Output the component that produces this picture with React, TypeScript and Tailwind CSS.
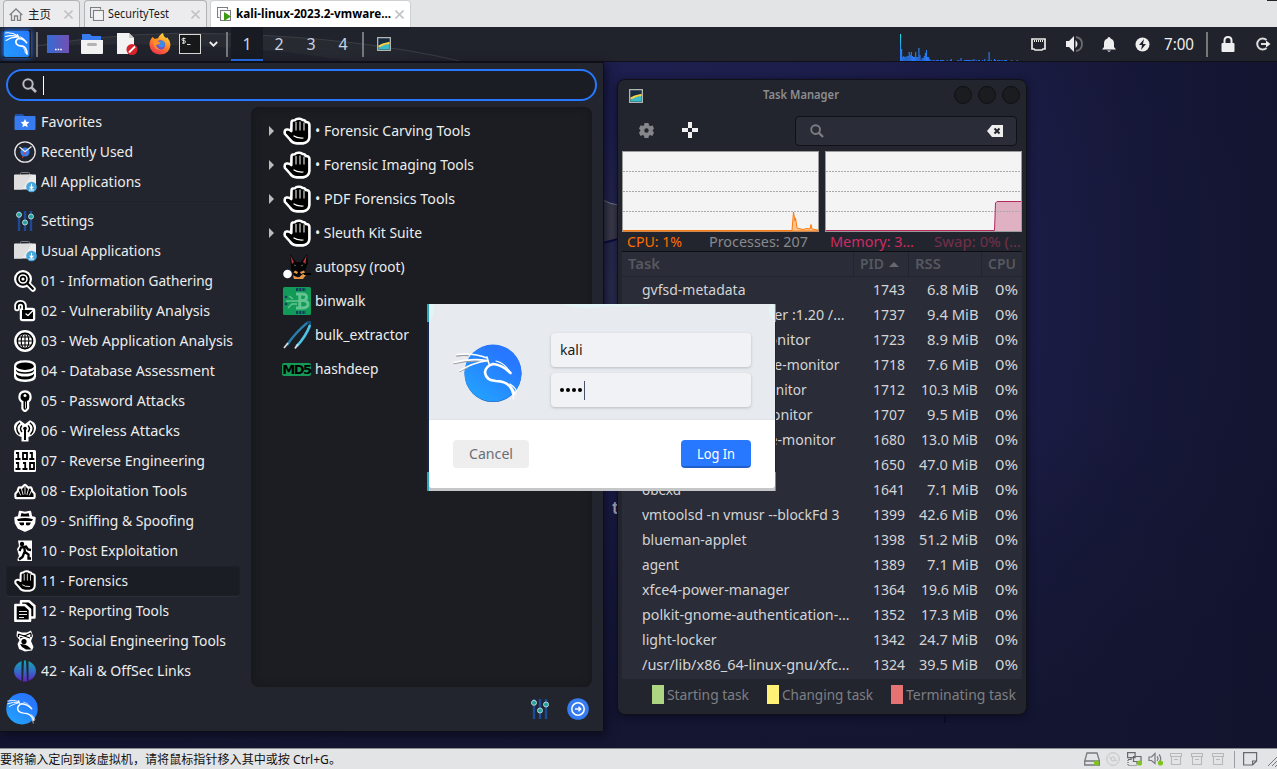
import React, { useLayoutEffect, useRef } from 'react';

type Kids = { children?: React.ReactNode };

/* Text run condensed so that it takes a given width. */
function Fit({ w, className = '', children }: { w: number; className?: string; children: string }) {
  const ref = useRef<HTMLSpanElement>(null);
  useLayoutEffect(() => {
    const el = ref.current;
    if (!el) return;
    el.style.transform = 'none';
    el.style.width = 'auto';
    const natural = el.getBoundingClientRect().width;
    el.style.width = `${w}px`;
    el.style.transform = `scaleX(${w / natural})`;
  }, [w, children]);
  return (
    <span ref={ref} className={'inline-block shrink-0 origin-left whitespace-pre ' + className}>
      {children}
    </span>
  );
}

/* Black pictogram on a white halo, as the Kali category icons. */
function Halo({ d, size = 22, halo = 4, children }: { d: string; size?: number; halo?: number } & Kids) {
  return (
    <svg width={size} height={size} viewBox="0 0 22 22" strokeLinejoin="round" strokeLinecap="round">
      <path d={d} fill="#fff" stroke="#fff" strokeWidth={halo} />
      <path d={d} fill="#000" />
      {children}
    </svg>
  );
}

function Hand({ size = 22 }: { size?: number }) {
  return (
    <svg width={size} height={size} viewBox="0 0 28 28" strokeLinejoin="round">
      <path
        d="M8.500 5.500Q8.500 3 12 3.200Q13 1.500 16 1.700Q18.500 1.500 19.500 3Q22 2.800 22.800 5Q26.400 4.800 26.400 8V20Q26 25.500 20 26.400H14Q9 26 7 22.500L2 17Q.8 13.300 3.500 12.600Q6 12 8.300 14Z"
        fill="#000" stroke="#fff" strokeWidth="2.600"
      />
      <path d="M13 5v8.500M17 4.500v9M21 5.500v8" stroke="#fff" strokeWidth="1" fill="none" />
      <path d="M10.500 18.800Q14 21.500 20.500 21" stroke="#fff" strokeWidth="1.100" fill="none" />
    </svg>
  );
}

function Folder() {
  return (
    <svg width="22" height="22" viewBox="0 0 22 22">
      <path d="M1 3h8l1.500 2H21v4H1z" fill="#1f4fa8" />
      <rect x="0.500" y="5" width="21" height="14" rx="1" fill="#367bf0" />
      <path d="M11 8l1.300 2.700 3 .4-2.200 2.100.5 3-2.600-1.400-2.600 1.400.5-3-2.200-2.100 3-.4z" fill="#fff" />
    </svg>
  );
}

function Clock() {
  return (
    <svg width="22" height="22" viewBox="0 0 22 22" fill="none">
      <circle cx="11" cy="11" r="10.200" stroke="#e8e8ea" strokeWidth="1.300" />
      <circle cx="11" cy="11" r="4.600" fill="#367bf0" />
      <path d="M5.500 6l5.500 4.800L17.500 5.500" stroke="#eee" strokeWidth="1.200" />
      <path d="M11 11L8.500 17" stroke="#d6403b" strokeWidth="1" />
    </svg>
  );
}

function Briefcase() {
  return (
    <svg width="23" height="22" viewBox="0 0 23 22" fill="none">
      <path d="M6.500 3.500V2.300Q6.500 1.500 7.500 1.500H14.500Q15.500 1.500 15.500 2.300V3.500" stroke="#777a80" />
      <path d="M1 3.500H21Q22 3.500 22 4.500V18.500H0V4.500Q0 3.500 1 3.500z" fill="#ececec" />
      <path d="M0 4.500L18 3.500 8 18.500H0z" fill="#dedede" />
      <circle cx="17.500" cy="16" r="5.300" fill="#46a6dd" />
      <path d="M17.500 12.800v4.700M15.600 15.700l1.900 2 1.900-2M15 19h5" stroke="#fff" strokeWidth="1.100" />
    </svg>
  );
}

function Sliders() {
  return (
    <svg width="22" height="22" viewBox="0 0 22 22">
      <path d="M5 1v20M11 1v20M17 1v20" stroke="#1b4a98" strokeWidth="2.400" />
      <g fill="#1fa3a0" stroke="#c9dcdc" strokeWidth="0.900">
        <circle cx="5" cy="4.800" r="2.500" />
        <circle cx="11" cy="12.500" r="2.500" />
        <circle cx="17" cy="6.500" r="2.500" />
      </g>
    </svg>
  );
}

const white = { stroke: '#fff', fill: 'none' };
const black = { stroke: '#000', fill: 'none' };

function Magnifier() {
  return (
    <svg width="22" height="22" viewBox="0 0 22 22" fill="none" strokeLinecap="round">
      <circle cx="9" cy="9" r="6.500" stroke="#fff" strokeWidth="5" fill="#fff" />
      <path d="M13.500 13.500L19 19" stroke="#fff" strokeWidth="5.500" />
      <circle cx="9" cy="9" r="5.800" stroke="#000" strokeWidth="2" />
      <circle cx="9" cy="9" r="2.400" stroke="#000" strokeWidth="1.600" />
      <path d="M13.500 13.500L18.800 18.800" stroke="#000" strokeWidth="2.200" />
    </svg>
  );
}
function Unlock() {
  return (
    <svg width="22" height="22" viewBox="0 0 22 22" fill="none" strokeLinecap="round" strokeLinejoin="round">
      <path d="M3 8.500V6.500Q3 2.800 6.500 2.800T10 6.500V9" stroke="#fff" strokeWidth="5.600" />
      <path d="M8.500 10.500H18.500V18.500H8.500z" stroke="#fff" strokeWidth="5.500" fill="#fff" />
      <path d="M3 8.500V6.500Q3 2.800 6.500 2.800T10 6.500V9" stroke="#000" strokeWidth="1.900" />
      <path d="M8 10H19V19H8z" fill="#000" />
      <path d="M12 14l2 1.500 6-6" stroke="#fff" strokeWidth="1.300" />
    </svg>
  );
}
function Globe() {
  return (
    <svg width="22" height="22" viewBox="0 0 22 22">
      <circle cx="11" cy="11" r="10.900" fill="#fff" />
      <circle cx="11" cy="11" r="7.700" fill="#fff" stroke="#000" strokeWidth="1.400" />
      <g {...black} strokeWidth="1.100">
        <ellipse cx="11" cy="11" rx="3.800" ry="7.700" />
        <path d="M3 11H19M11 3V19M4.500 7H17.500M4.500 15H17.500" />
      </g>
    </svg>
  );
}
function Database() {
  return (
    <svg width="22" height="22" viewBox="0 0 22 22">
      <path d="M0 6Q0 .3 11 .3T22 6V16.500Q22 21.900 11 21.900T0 16.500z" fill="#fff" />
      <ellipse cx="11" cy="6.200" rx="8.800" ry="3.700" fill="#000" />
      <path d="M2 9.500Q4 12.300 11 12.300T20 9.500V10.500Q19 13.800 11 13.800T2 10.500zM2 13.800Q4 16.600 11 16.600T20 13.800V15.500Q19 19.500 11 19.500T2 15.500z" fill="#000" />
    </svg>
  );
}
function KeyIcon() {
  return (
    <Halo d="M11 2.500Q15.500 2.800 15.500 7 15.500 10 13 11V18L11 20 9.500 18.500V11Q6.500 10 6.500 7 6.500 2.800 11 2.500z" halo={4.400}>
      <circle cx="11" cy="5.500" r="1.500" fill="#fff" />
      <path d="M11.500 12v6" {...white} strokeWidth="0.800" />
    </Halo>
  );
}
function Antenna() {
  return (
    <svg width="22" height="22" viewBox="0 0 22 22" fill="none">
      <path d="M6 .3Q-1.500 3 .3 10Q2 15.500 7.500 17V21.500H14.500V17Q20 15.500 21.700 10Q23.500 3 16 .3L11 4z" fill="#fff" />
      <path d="M6 2.800Q-.3 8 5.500 14.500M16 2.800Q22.300 8 16.500 14.500M8 5.500Q5 8.500 8 12M14 5.500Q17 8.500 14 12" stroke="#000" strokeWidth="1.400" />
      <circle cx="11" cy="8.500" r="1.800" fill="#000" />
      <path d="M11 9V20" stroke="#000" strokeWidth="2" />
    </svg>
  );
}
function Binary() {
  return (
    <svg width="22" height="22" viewBox="0 0 22 22">
      <rect width="22" height="22" rx="1.500" fill="#fff" />
      <g {...black} strokeWidth="1.800">
        <path d="M2 3h2.200v6M1.500 9h5M9 3h4v6H9zM15.800 3h2.200v6M15.300 9h5M2 13h2.200v6M1.500 19h5M9 13h2.200v6M8.500 19h5M16 13h4v6h-4z" />
      </g>
    </svg>
  );
}
function Burst() {
  return (
    <Halo d="M2.500 17V14L4.500 12 5.500 8.500 8 9 11 6 14 9 16.500 8.500 17.500 12 19.500 14V17z" halo={4.400}>
      <path d="M6.500 15L4.500 10.500M9 14.500L7.500 9M11 14V7M13 14.500L14.500 9M15.500 15L17.500 10.500" {...white} strokeWidth="0.900" />
    </Halo>
  );
}
function Spy() {
  return (
    <svg width="22" height="22" viewBox="0 0 22 22" strokeLinejoin="round">
      <path d="M1.500 8L5 7.200 6 2 11 3 16 2 17 7.200 20.500 8 20 13 17.500 17.500 11 20.500 4.500 17.500 2 13z" fill="#fff" stroke="#fff" strokeWidth="2.500" />
      <path d="M6.500 6.500L7.500 3Q11 4.500 14.500 3L15.500 6.500zM3 9.200Q11 7 19 9.200L18 11H4zM5 12.500H10V15Q6 16.500 5 12.500zM12 12.500H17Q16 16.500 12 15z" fill="#000" />
    </svg>
  );
}
function Runner() {
  return (
    <svg width="22" height="22" viewBox="0 0 22 22" fill="none">
      <path d="M4 .5H18V21H4Q2.500 20 5 16L3 9 5 6z" fill="#fff" />
      <circle cx="8" cy="4" r="2.200" fill="#000" />
      <path d="M10 6L11 12L14.500 14.500V18.500H17M10.500 12L8.500 17L5 19.500M5.500 11L7 7.500L12 6.500L14 9.500L17 10" stroke="#000" strokeWidth="2.300" />
    </svg>
  );
}
function Papers() {
  return (
    <svg width="22" height="22" viewBox="0 0 22 22" strokeLinejoin="round">
      <path d="M7 1.200H15L20.500 6V17.500H7z" fill="#000" stroke="#fff" strokeWidth="2.400" />
      <path d="M1.400 5H11L16 9.500V20.800H1.400z" fill="#000" stroke="#fff" strokeWidth="2.600" />
      <path d="M5 11.500H13M5 14.500H13M5 17.500H10" {...white} strokeWidth="0.900" />
    </svg>
  );
}
function Mask() {
  return (
    <svg width="22" height="22" viewBox="0 0 22 22" fill="none">
      <path d="M3 1L8 2.500 13 2.500 17 .5 19 6 17 11 19.500 17 18 20.500 11 21.500 5 19 3.500 14 5.500 10 2.500 6z" fill="#fff" />
      <path d="M4.500 4L16 8M17 3L6 8M4.500 4V7M17 3.500V7" stroke="#000" strokeWidth="1.300" />
      <circle cx="10" cy="11.500" r="2.600" fill="#000" />
      <path d="M6 14Q12 14 15 17L17.500 19.500H12L8 17z" fill="#000" />
    </svg>
  );
}
function OffSec() {
  return (
    <svg width="22" height="22" viewBox="0 0 22 22">
      <defs>
        <linearGradient id="osg" x1="0" y1="0" x2="0" y2="1">
          <stop offset="0" stopColor="#10a7b5" />
          <stop offset="0.550" stopColor="#3568c8" />
          <stop offset="1" stopColor="#6423c4" />
        </linearGradient>
      </defs>
      <path d="M7.500 1V21Q0 17.500 0 11T7.500 1zM14.500 1V21Q22 17.500 22 11T14.500 1zM10 .5H12L13 21.500H9z" fill="url(#osg)" />
    </svg>
  );
}

/* Kali dragon; the disc and the curl share a 100 x 85 grid. */
function KaliRound({ width, height, box, id, halo }: { width: number; height: number; box: string; id: string; halo?: boolean }) {
  return (
    <svg width={width} height={height} viewBox={box} fill="none" strokeLinecap="round" strokeLinejoin="round">
      <defs>
        <linearGradient id={id} x1="0.200" y1="0.900" x2="0.700" y2="0.200">
          <stop offset="0" stopColor="#23a0ff" />
          <stop offset="1" stopColor="#2777ff" />
        </linearGradient>
      </defs>
      {halo && <circle cx="53" cy="43.600" r="28.500" fill="#1b61c4" />}
      <circle cx="53" cy="43" r="28.500" fill={`url(#${id})`} />
      {halo && <path d="M14 33.500Q30 30 47 31.500M17 26Q22 25 28 25.500M20 41.500Q24 39 28 37.500" stroke="#9a9da3" strokeWidth="1.400" />}
      <g stroke="#fff">
        <path d={halo ? 'M17 24.500Q33 22.500 47 28 M14 32.500Q30 28 47 30.500 M20 40.500Q32 33 48 30.500 M47 27L49 34' : 'M27 29Q38 26 47 30 M27 34Q38 30 47 31.500 M30 39Q38 34 48 32 M47 28L49 34'} strokeWidth="1.600" />
        <path d="M70.500 43Q62 34.500 53 34Q45.500 36 45 42.500Q46 50.500 56 51Q70 51 74.500 64" strokeWidth="2.600" />
        <path d="M56 31Q65 33 70.500 43M66 53Q72.500 58 73.500 69M70 54Q76 58 76.500 62" strokeWidth="1.200" />
      </g>
    </svg>
  );
}

function KaliTile() {
  return (
    <svg width="28" height="28" viewBox="0 0 56 56" fill="none" strokeLinecap="round" className="shadow-[0_0_5px_#2777ff]">
      <defs>
        <linearGradient id="ktg" x1="0" y1="1" x2="1" y2="0">
          <stop offset="0" stopColor="#249dff" />
          <stop offset="1" stopColor="#2777ff" />
        </linearGradient>
      </defs>
      <rect x="1" y="1" width="52" height="53" rx="5" fill="url(#ktg)" />
      <g stroke="#fff">
        <path d="M5 6Q18 4 30 12M5 13Q18 9 30 14M6 21Q18 13 31 14.500M29 9L33 18" strokeWidth="2.200" />
        <path d="M47 25Q39 16 31 17Q23 21 27 28Q31 33 39 32Q47 34 48 48" strokeWidth="3.500" />
        <path d="M34 13Q42 15 47 26M40 34Q44 38 45 46" strokeWidth="1.800" />
      </g>
    </svg>
  );
}

const topRows: [string, number, React.ReactNode][] = [
  ['Favorites', 61, <Folder />],
  ['Recently Used', 92, <Clock />],
  ['All Applications', 100, <Briefcase />],
];
const catRows: [string, number, React.ReactNode][] = [
  ['Settings', 53, <Sliders />],
  ['Usual Applications', 120, <Briefcase />],
  ['01 - Information Gathering', 172, <Magnifier />],
  ['02 - Vulnerability Analysis', 169, <Unlock />],
  ['03 - Web Application Analysis', 192, <Globe />],
  ['04 - Database Assessment', 174, <Database />],
  ['05 - Password Attacks', 144, <KeyIcon />],
  ['06 - Wireless Attacks', 139, <Antenna />],
  ['07 - Reverse Engineering', 164, <Binary />],
  ['08 - Exploitation Tools', 146, <Burst />],
  ['09 - Sniffing & Spoofing', 153, <Spy />],
  ['10 - Post Exploitation', 137, <Runner />],
  ['11 - Forensics', 87, <Hand />],
  ['12 - Reporting Tools', 128, <Papers />],
  ['13 - Social Engineering Tools', 185, <Mask />],
  ['42 - Kali & OffSec Links', 150, <OffSec />],
];

function MenuRow({ row }: { row: [string, number, React.ReactNode] }) {
  const active = row[0].startsWith('11');
  return (
    <div className={'flex h-[30px] w-[234px] shrink-0 items-center rounded pl-2 ' + (active ? 'bg-[#1b1d24] shadow-[0_0_0_1px_#1e2027_inset,0_1px_0_#2b2d36]' : '')}>
      <div className="w-[27px] shrink-0">{row[2]}</div>
      <Fit w={row[1]} className="mb-0.5">{row[0]}</Fit>
    </div>
  );
}

function Doberman() {
  return (
    <svg width="28" height="28" viewBox="0 0 28 28">
      <path d="M7 1L13 9H18L24 1L25 10L22 18L20 23H12L8 16z" fill="#050505" />
      <path d="M7.500 2.500L11 9 9 11zM23.500 2.500L20 9 22.500 11z" fill="#b8333a" />
      <path d="M12 17.500L15 19 14 21 10.500 19.500zM21 17.500L17 19 18 21 22 19.500zM10 22.500L15 24.500 20 21 23 22 20 26 11 26z" fill="#e8964a" />
      <path d="M14 20L16 22 18 20 17 24H15z" fill="#111" />
      <path d="M11 12l2 .8M20 12l-2 .8" stroke="#777" strokeWidth="0.800" />
      <path d="M21 21H28" stroke="#000" strokeWidth="2" />
      <circle cx="4.500" cy="21" r="4.300" fill="#fff" />
    </svg>
  );
}
function Binwalk() {
  return (
    <svg width="28" height="28" viewBox="0 0 28 28" fill="none">
      <rect width="28" height="28" rx="1.500" fill="#119a58" />
      <path d="M13 2.500H23M13 25.500H23" stroke="#173d63" strokeWidth="3" strokeDasharray="2.200 1" />
      <path d="M13 7H19Q24 7 23.500 10.500T19.500 13.500Q25.500 14 25 17.500T19 21H13M16.800 7V21M16.800 13.600H20" stroke="#62c391" strokeWidth="3" />
      <path d="M16 14H3M14 17H9L5 21M10 12L6 9" stroke="#62c391" strokeWidth="1.400" />
      <circle cx="3" cy="10" r="1.300" fill="#173d63" /><circle cx="3" cy="17" r="1.300" fill="#173d63" />
    </svg>
  );
}
function Tweezers() {
  return (
    <svg width="28" height="28" viewBox="0 0 28 28" fill="none">
      <path d="M4 24Q13 11 24 2Q27.500 -.5 27.500 4Q24 15 13 26" stroke="#11547f" strokeWidth="2.600" />
      <path d="M4 24Q13 11 24 2" stroke="#2d7fa9" strokeWidth="2.200" />
      <path d="M27 4Q23 15 14 25" stroke="#55c4df" strokeWidth="2.400" />
      <path d="M1 27L5 22M12 27.500L15 23" stroke="#d6d9dc" strokeWidth="1.800" />
    </svg>
  );
}
function Md5() {
  return (
    <span className="-ml-px inline-block w-[30px] whitespace-nowrap rounded-[2px] bg-[#159957] text-center font-['DejaVu_Sans'] text-[13px] leading-[13px] font-bold tracking-[-1.500px] text-black">MD5</span>
  );
}

function AppMenu() {
  return (
    <section className="absolute top-[35px] left-0 flex h-[670px] w-[604px] flex-col border border-l-0 border-[#0e0f14] bg-[#23252e] pl-1.5 text-[15px] text-[#eceded] shadow-[2px_3px_10px_#0b0c20]">
      <div className="mt-1.5 flex h-8 w-[591px] shrink-0 items-center rounded-full border-2 border-[#2777ff] bg-[#1b1d24] pl-3.5">
        <svg width="15" height="15" viewBox="0 0 15 15" fill="none" stroke="#b9babd" strokeWidth="2">
          <circle cx="6" cy="6" r="4.700" /><path d="M9.500 9.500L14 14" strokeWidth="2.600" />
        </svg>
        <i className="ml-1.5 h-[19px] w-px bg-white" />
      </div>
      <div className="flex pt-1.5">
        <nav className="flex w-[245px] flex-col">
          {topRows.map((r) => <MenuRow key={r[0]} row={r} />)}
          <hr className="my-1 w-[234px] border-[#1f2129]" />
          {catRows.map((r) => <MenuRow key={r[0]} row={r} />)}
        </nav>
        <div className="flex h-[580px] w-[341px] flex-col rounded-lg bg-[#1b1d23] pt-[7px] shadow-[0_0_7px_2px_#17181c_inset]">
          {([['• Forensic Carving Tools', 155.500], ['• Forensic Imaging Tools', 159], ['• PDF Forensics Tools', 140], ['• Sleuth Kit Suite', 107]] as [string, number][]).map(([t, w]) => (
            <div key={t} className="flex h-[34px] items-center">
              <svg width="6" height="10" viewBox="0 0 6 10" className="ml-[18px]"><path d="M0 0L5 5L0 10z" fill="#bbb" /></svg>
              <div className="ml-[8px] mr-[4px] flex"><Hand size={28} /></div>
              <Fit w={w} className="mb-0.5">{t}</Fit>
            </div>
          ))}
          {([['autopsy (root)', 89.500, <Doberman />], ['binwalk', 50.500, <Binwalk />], ['bulk_extractor', 94, <Tweezers />], ['hashdeep', 63.500, <Md5 />]] as [string, number, React.ReactNode][]).map(([t, w, icon]) => (
            <div key={t} className="flex h-[34px] items-center pl-[32px]">
              <div className="mr-[4px] flex w-7">{icon}</div>
              <Fit w={w} className="mb-0.5">{t}</Fit>
            </div>
          ))}
        </div>
      </div>
      <div className="flex flex-1 items-center">
        <KaliRound width={32} height={32} box="24 14.500 58 58" id="user" />
        <div className="ml-[491px]"><Sliders /></div>
        <svg width="22" height="22" viewBox="0 0 22 22" fill="none" stroke="#fff" className="ml-4">
          <circle cx="11" cy="11" r="10.800" fill="#367bf0" stroke="none" />
          <circle cx="11" cy="11" r="6.200" strokeWidth="1.500" />
          <path d="M8 11h5.500M11.500 8.800L13.700 11l-2.200 2.200" strokeWidth="1.400" />
        </svg>
      </div>
    </section>
  );
}

function GraphIcon() {
  return (
    <svg width="14" height="14" viewBox="0 0 15 15">
      <rect x="0.700" y="0.700" width="13.600" height="13.600" fill="#182c3f" stroke="#b9bdb9" strokeWidth="1.300" />
      <path d="M1.500 12Q5 8 8 8.500L13.500 7V13.500H1.500z" fill="#38bcc9" />
      <path d="M1.500 9L6 7 13.500 5V7.500L8 8.500 1.500 11.500z" fill="#f5d34b" />
    </svg>
  );
}

const procs: [string, number, string, string][] = [
  ['gvfsd-metadata', 103.500, '1743', '6.8 MiB'],
  ['gvfsd-trash --spawner :1.20 /…', 202.500, '1737', '9.4 MiB'],
  ['xfce4-clipboard-monitor', 168.500, '1723', '8.9 MiB'],
  ['gvfs-gphoto2-volume-monitor', 197.500, '1718', '7.6 MiB'],
  ['gvfs-mtp-volume-monitor', 164.500, '1712', '10.3 MiB'],
  ['gvfs-goa-volume-monitor', 170.500, '1707', '9.5 MiB'],
  ['gvfs-udisks2-volume-monitor', 193.500, '1680', '13.0 MiB'],
  ['agent', 37, '1650', '47.0 MiB'],
  ['obexd', 39, '1641', '7.1 MiB'],
  ['vmtoolsd -n vmusr --blockFd 3', 197.500, '1399', '42.6 MiB'],
  ['blueman-applet', 104.500, '1398', '51.2 MiB'],
  ['agent', 37, '1389', '7.1 MiB'],
  ['xfce4-power-manager', 147.500, '1364', '19.6 MiB'],
  ['polkit-gnome-authentication-…', 207.500, '1352', '17.3 MiB'],
  ['light-locker', 74.500, '1342', '24.7 MiB'],
  ['/usr/lib/x86_64-linux-gnu/xfc…', 207.500, '1324', '39.5 MiB'],
];

function TaskManager() {
  const grid = 'M1 20.500H196M1 40.500H196M1 60.500H196';
  return (
    <section className="absolute top-[52px] left-[617px] flex h-[636px] w-[410px] flex-col rounded-lg border border-[#101117] bg-[#23252e] px-1 text-[15px] text-[#d3d4d6] shadow-[0_2px_9px_#0c0d22]">
      <header className="flex h-[31px] shrink-0 items-center pl-[7px] text-[13px] font-semibold text-[#8b8d90]">
        <GraphIcon />
        <div className="ml-[120px] flex w-[191px]"><Fit w={76} className="mb-0.5">Task Manager</Fit></div>
        <div className="flex gap-[6px] pb-px">
          {[0, 1, 2].map((i) => <i key={i} className="size-[18px] rounded-full border border-[#0f1014] bg-[#1b1c20]" />)}
        </div>
      </header>
      <div className="flex h-10 shrink-0 items-center">
        <svg width="15" height="15" viewBox="0 0 15 15" className="mb-0.5 ml-[17px]">
          <path fillRule="evenodd" d="M5.500 0h4l.5 2.300 1.500.9L13.500 2.300 15 5.500 13.500 7.500 15 9.800 13.300 12.900 11 12 9.800 12.900 9.500 15h-4L5 12.800 3.700 12 1.500 12.900 0 9.700 1.500 7.500 0 5.400 1.700 2.200 3.900 3 5 2.300zM7.500 5.300a2.200 2.200 0 100 4.400 2.200 2.200 0 000-4.400z" fill="#85868a" />
        </svg>
        <svg width="16" height="16" viewBox="0 0 16 16" className="mb-0.5 ml-[28px]">
          <path d="M6 0h4v6h6v4h-6v6H6v-6H0V6h6z" fill="#f0f0f0" /><path d="M6 6h4v4H6z" fill="#23252e" />
        </svg>
        <div className="ml-[97px] flex h-[30px] w-[222px] items-center rounded border border-[#101117] bg-[#2a2c37] pr-[13px] pl-3.5">
          <svg width="14" height="14" viewBox="0 0 15 15" fill="none" stroke="#7c7d82" strokeWidth="2">
            <circle cx="6" cy="6" r="4.700" /><path d="M9.500 9.500L14 14" strokeWidth="2.400" />
          </svg>
          <svg width="16" height="12" viewBox="0 0 16 12" className="ml-auto">
            <path d="M5 0H16V12H5L0 6z" fill="#eee" /><path d="M7.500 3.500l5 5M12.500 3.500l-5 5" stroke="#23252e" strokeWidth="2" />
          </svg>
        </div>
      </div>
      <div className="flex shrink-0 gap-[6px]">
        <svg width="197" height="81" viewBox="0 0 197 81" fill="none">
          <rect x="0.500" y="0.500" width="196" height="80" fill="#f4f4f4" stroke="#9b9b9b" />
          <path d={grid} stroke="#aaa" strokeDasharray="2 1" />
          <path d="M1 79.500H170L171.500 61 173 70 173.500 67 175 77 181 78.500 185 77.500 188 78 189 73.500 190 78 196 79V80H1z" fill="#ffc38e" stroke="#fb7a0c" strokeWidth="1" />
        </svg>
        <svg width="197" height="81" viewBox="0 0 197 81" fill="none">
          <rect x="0.500" y="0.500" width="196" height="80" fill="#f4f4f4" stroke="#9b9b9b" />
          <path d="M1 79.500H169.500L170.500 52 172 50.500H196V80H1z" fill="#dfb1c3" />
          <path d={grid} stroke="#aaa" strokeDasharray="2 1" />
          <path d="M1 79.500H169.500L170.500 52 172 50.500H196" stroke="#b5295b" />
        </svg>
      </div>
      <div className="flex h-[20px] shrink-0 items-center overflow-hidden border-b border-[#0c0d11] leading-[19px]">
        <div className="ml-[5px] w-[82px] text-[#ff6d00]"><Fit w={55}>CPU: 1%</Fit></div>
        <div className="w-[121px] text-[#88898d]"><Fit w={99}>Processes: 207</Fit></div>
        <div className="w-[104px] text-[#d02b63]"><Fit w={84}>Memory: 3…</Fit></div>
        <div className="text-[#74304b]"><Fit w={87}>Swap: 0% (…</Fit></div>
      </div>
      <div className="flex h-[427px] shrink-0 flex-col bg-[#2a2c37]">
        <div className="flex h-[25px] shrink-0 items-center border-b border-[#23252e] font-semibold text-[#56585f]">
          <div className="flex h-full w-[232px] items-center border-r border-[#23252e] pl-1.5"><Fit w={32} className="mb-0.5">Task</Fit></div>
          <div className="flex h-full w-[55px] items-center border-r border-[#23252e] pl-1.5">
            <Fit w={24} className="mb-0.5">PID</Fit>
            <svg width="10" height="5" viewBox="0 0 10 5" className="ml-[5px]"><path d="M0 5L5 0l5 5z" fill="#66686e" /></svg>
          </div>
          <div className="flex h-full w-[73px] items-center border-r border-[#23252e] pl-1.5"><Fit w={26} className="mb-0.5">RSS</Fit></div>
          <div className="flex pl-1.5"><Fit w={28} className="mb-0.5">CPU</Fit></div>
        </div>
        <ul className="pt-px">
          {procs.map(([name, w, pid, rss]) => (
            <li key={pid} className="flex h-[25px] items-center pb-0.5 pl-5">
              <div className="flex w-[212px]"><Fit w={w}>{name}</Fit></div>
              <div className="flex w-[51px] justify-end"><Fit w={32}>{pid}</Fit></div>
              <div className="flex w-[73px] justify-end"><Fit w={rss.length === 7 ? 51.500 : rss[0] === '1' ? 57 : 59}>{rss}</Fit></div>
              <div className="flex w-[40px] justify-end"><Fit w={23}>0%</Fit></div>
            </li>
          ))}
        </ul>
      </div>
      <footer className="flex h-[31px] shrink-0 items-center pl-[30px] text-[#7e7f83]">
        <i className="mr-[3px] h-[19px] w-3 bg-[#aed581]" /><Fit w={82}>Starting task</Fit>
        <i className="mr-[3px] ml-[18px] h-[19px] w-3 bg-[#fff176]" /><Fit w={91}>Changing task</Fit>
        <i className="mr-[3px] ml-[18px] h-[19px] w-3 bg-[#e57373]" /><Fit w={110}>Terminating task</Fit>
      </footer>
    </section>
  );
}

function Login() {
  return (
    <section className="absolute top-[277px] left-[427px] h-[187px] w-[349px] border-r border-l-2 border-x-[#132850] bg-[#c5c6c8] pb-[3px] text-[15px]">
      <div className="flex h-full flex-col overflow-hidden rounded-[3px] bg-white">
        <div className="flex h-[116px] shrink-0 border-b border-[#e0e2e4] bg-[#e7eaee] pl-[11px]">
          <div className="w-[111px] pt-[26px]"><KaliRound width={100} height={85} box="0 0 100 85" id="login" halo /></div>
          <div className="flex flex-col gap-1.5 pt-[29px]">
            <div className="flex h-[34px] w-[200px] items-center rounded bg-[#f1f2f6] pl-[9px] text-[#1b1b1b] shadow-[0_1px_3px_#b9bbc0]"><Fit w={22.500} className="mb-0.5">kali</Fit></div>
            <div className="flex h-[34px] w-[200px] items-center rounded bg-[#f1f2f6] pl-[9px] shadow-[0_1px_3px_#b9bbc0]">
              <div className="flex gap-0.5">{[0, 1, 2, 3].map((i) => <i key={i} className="size-1 rounded-full bg-black" />)}</div>
              <i className="ml-0.5 h-[19px] w-px bg-[#46536a]" />
            </div>
          </div>
        </div>
        <div className="flex justify-between pt-5 pr-6 pl-6">
          <div className="flex h-7 w-[76px] items-center justify-center rounded bg-[#eee] text-[#6b6d75]"><Fit w={44} className="mb-0.5">Cancel</Fit></div>
          <div className="flex h-7 w-[70px] items-center justify-center rounded border-b-2 border-[#205fcb] bg-[#2777ff] text-white"><Fit w={38}>Log In</Fit></div>
        </div>
      </div>
      <svg className="absolute top-0 -left-0.5" width="349" height="187" viewBox="0 0 349 187">
        <path d="M0 0h2v18H0zM348 0h1v18h-1zM0 168h2v19H0zM348 168h1v19h-1z" fill="#2ba6c0" />
        <path d="M2 0H6Q10 10 2 17zM347 0H343Q339 10 347 17zM135 0H225Q205 4 180 2Q155 7 135 0z" fill="#e3f4f6" />
      </svg>
    </section>
  );
}

const load = [27, 12, 4, 5, 4, 4, 5, 5, 9, 6, 9, 5, 4, 4, 9, 4, 4, 13, 6, 1, 3, 3, 5, 8, 11, 4, 4, 2, 1, 0, 1, 1, 0, 1, 1, 1, 0, 1, 1, 1, 1, 0, 0, 1, 0, 0, 1, 2, 0, 0, 0, 0, 0, 1, 1, 0, 3, 0, 0, 1, 1, 1, 1, 1, 1, 1, 1, 1, 2, 0, 1, 0, 1, 1, 0, 0, 1, 0, 2, 0, 0, 1, 9, 0, 1, 0, 0, 2, 1, 0, 1, 1, 1, 0, 1, 0, 1, 1, 1, 0, 0, 0, 0, 1, 0, 0, 0, 0, 1];

function Panel() {
  const rule = <i className="h-[25px] w-[2px] shrink-0 bg-[#77787c]" />;
  return (
    <div className="relative flex h-[35px] w-full shrink-0 items-center border-b border-[#101117] bg-[#21232c]">
      <svg className="absolute inset-0" width="500" height="34" viewBox="0 0 500 34">
        <defs><linearGradient id="streak"><stop stopColor="#2a2c34" /><stop offset="0.700" stopColor="#282a32" /><stop offset="1" stopColor="#21232c" /></linearGradient></defs>
        <path d="M36 19Q130 3 230 7Q360 11 460 34H350Q220 12 36 19z" fill="url(#streak)" />
        <path d="M36 19Q130 3 230 7Q360 11 460 34" fill="none" stroke="#3c3e45" />
      </svg>
      <div className="relative flex h-full items-center">
        <div className="ml-[3px] flex w-[33px]"><KaliTile /></div>
        {rule}
        <svg className="ml-[9px]" width="22" height="18" viewBox="0 0 22 18">
          <defs><linearGradient id="dsk"><stop stopColor="#356cd3" /><stop offset="1" stopColor="#7350b4" /></linearGradient></defs>
          <rect width="22" height="18" fill="url(#dsk)" /><path d="M8 14.500h7" stroke="#fff" strokeWidth="1.500" strokeDasharray="1.600 1" />
        </svg>
        <svg className="ml-3" width="22" height="20" viewBox="0 0 22 20">
          <path d="M1 0h8l2 2h9v6H1z" fill="#367bf0" /><path d="M0 6h22v13q0 1-1 1H1q-1 0-1-1z" fill="#f2f2f2" /><rect x="6" y="9" width="10" height="3" rx="1.500" fill="#b3b3b3" />
        </svg>
        <svg className="ml-[14px]" width="21" height="22" viewBox="0 0 21 22">
          <path d="M0 0h12l5 5v16H0z" fill="#f3f3f3" /><path d="M12 0l5 5h-5z" fill="#ccc" />
          <circle cx="15" cy="16.500" r="5.500" fill="#d9232b" /><path d="M12 19.500l6-6" stroke="#fff" strokeWidth="1.800" />
        </svg>
        <svg className="ml-[11px]" width="22" height="22" viewBox="0 0 22 22">
          <defs><linearGradient id="ffx" x1="0.800" y1="0" x2="0.300" y2="1"><stop stopColor="#ffe14a" /><stop offset="0.450" stopColor="#ff9227" /><stop offset="1" stopColor="#f2304e" /></linearGradient></defs>
          <path d="M3.500 4L6 6Q8 5 9 5.500 10 2 14 0 14 3 17 5 18.500 5 18 4 21.500 8 21.500 12 20.500 21.500 11 21.500 1.500 21 .5 12 .5 7 3.500 4z" fill="url(#ffx)" />
          <circle cx="11.500" cy="12" r="4.700" fill="#7154c8" /><circle cx="12.500" cy="11" r="3.200" fill="#3b8bea" />
          <path d="M4 8Q7 7 11.500 9.500 10 12 7 12 8 16 12 16.500 5 18 4 8z" fill="#ff8f26" />
        </svg>
        <svg className="ml-2" width="22" height="20" viewBox="0 0 22 20" fill="none">
          <rect x="0.500" y="0.500" width="21" height="19" fill="#17181a" stroke="#d9d9d9" />
          <path d="M6.500 4.500H4q-1 0-1 1t1 1.200h1.500q1 0 1 1T5.500 9H3M4.700 3.500v6.500M8 10.500h3.500" stroke="#eee" strokeWidth="0.900" />
        </svg>
        <svg className="ml-2" width="9" height="6" viewBox="0 0 9 6"><path d="M.8 1l3.700 3.700L8.200 1" fill="none" stroke="#eee" strokeWidth="1.800" /></svg>
        <i className="ml-2 h-[34px] w-0" />
        {rule}
        <div className="ml-[3px] flex text-base text-[#c9d4e2]">
          {['1', '2', '3', '4'].map((n) => (
            <div key={n} className={'flex h-[34px] w-8 items-center justify-center ' + (n === '1' ? 'border-b-2 border-[#2777ff] bg-[#191b22] pt-0.5' : '')}>{n}</div>
          ))}
        </div>
        <i className="w-[3px]" />
        {rule}
        <div className="ml-[13px]"><GraphIcon /></div>
      </div>
      <svg className="absolute top-[7px] left-[900px]" width="120" height="27" viewBox="0 0 120 27">
        <defs><linearGradient id="cpu" x1="0" y1="0" x2="0" y2="27" gradientUnits="userSpaceOnUse"><stop stopColor="#20dcd8" /><stop offset="0.600" stopColor="#2988f5" /><stop offset="1" stopColor="#2777ff" /></linearGradient></defs>
        {load.map((h, i) => <rect key={i} x={i * 1.080} y={27 - h} width="1.080" height={h} fill="url(#cpu)" />)}
      </svg>
      <div className="relative ml-auto flex h-full items-center pr-[6px] text-[#eee]">
        <svg width="15" height="13" viewBox="0 0 15 13" fill="none" stroke="#ececea"><path d="M1 1h13v10h-2l-1 1H4l-1-1H1z" strokeWidth="1.700" /><path d="M3.500 2v2M5.500 2v2M7.500 2v2M9.500 2v2M11.500 2v2" /></svg>
        <svg className="ml-5" width="18" height="16" viewBox="0 0 18 16" fill="none">
          <path d="M0 5h3l5-5v16l-5-5H0z" fill="#eee" /><path d="M9.500 4q4 4 0 8z" fill="#eee" /><path d="M10 1q6 1 6 7t-6 7" stroke="#6a6b70" strokeWidth="1.800" />
        </svg>
        <svg className="ml-[18px]" width="14" height="15" viewBox="0 0 14 15" fill="#eee"><path d="M7 0q1.500 0 1.500 1.500Q12 2.500 12 6.500v3.500l2 2.500H0L2 10V6.500Q2 2.500 5.500 1.500 5.500 0 7 0zM5 13.500h4L7 15z" /></svg>
        <svg className="ml-[19px]" width="15" height="15" viewBox="0 0 15 15"><circle cx="7.500" cy="7.500" r="7" fill="#eee" /><path d="M9 2L4 8h3L6 13l5-6H8z" fill="#20222b" /></svg>
        <div className="ml-[14px] flex text-base"><Fit w={30}>7:00</Fit></div>
        <i className="w-3" />
        {rule}
        <svg className="ml-[13px]" width="14" height="16" viewBox="0 0 14 16"><path d="M3.500 8V4.500Q3.500 1 7 1t3.500 3.500V8" fill="none" stroke="#eee" strokeWidth="2" /><rect x="0.500" y="7" width="13" height="9" rx="1" fill="#eee" /></svg>
        <svg className="ml-[20px]" width="16" height="14" viewBox="0 0 16 14" fill="none" stroke="#ddd" strokeWidth="2"><path d="M11.500 3A5.500 5.500 0 1011.500 11" /><path d="M6 7h8" /><path d="M11 3.500L15.500 7 11 10.500z" fill="#eee" stroke="none" /></svg>
      </div>
    </div>
  );
}

function TabX() {
  return <svg width="9" height="9" viewBox="0 0 9 9"><path d="M.5.5l8 8M8.500.5l-8 8" stroke="#c2c3c5" strokeWidth="1.600" /></svg>;
}
function Squares({ play = false }: { play?: boolean }) {
  return (
    <svg width="14" height="14" viewBox="0 0 14 14" fill="none" stroke="#7b7d80" strokeWidth="1.100">
      <path d="M2.500 10.500H.5V.5h10V2.500" /><rect x="3.500" y="3.500" width="10" height="10" fill="#fff" fillOpacity={play ? 1 : 0.400} />
      {play && <path d="M7 5v9l7-4.500z" fill="#3b9c14" stroke="none" />}
    </svg>
  );
}

function TabStrip() {
  const tab = 'flex h-[27px] items-center rounded-t border border-b-0 border-[#b2b3b5]';
  return (
    <div className="flex h-[27px] w-full shrink-0 items-start bg-[#e3e4e6] text-[12px] text-[#1a1a1a]">
      <div className={tab + ' ml-[3px] w-[77px] bg-[#ececee] pl-[5px]'}>
        <svg width="14" height="13" viewBox="0 0 14 13" fill="none" stroke="#808285" strokeWidth="1.300"><path d="M.7 7L7 1l6.300 6M2.500 6v6.300h3V8h3v4.300h3V6" /></svg>
        <div className="mr-[13px] ml-[5px] flex"><Fit w={23} className="font-['Noto_Sans_CJK_SC']">主页</Fit></div>
        <TabX />
      </div>
      <div className={tab + ' ml-1 w-[123px] bg-[#ececee] pl-[5px]'}>
        <Squares />
        <div className="mr-[22px] ml-[4px] flex"><Fit w={61}>SecurityTest</Fit></div>
        <TabX />
      </div>
      <div className={tab + ' ml-[3px] w-[201px] border-[#d0d1d3] bg-white pl-[6px] font-bold text-black'}>
        <Squares play />
        <div className="mr-[4px] ml-[5px] flex"><Fit w={155}>kali-linux-2023.2-vmware...</Fit></div>
        <TabX />
      </div>
      <i className="mt-0 ml-auto h-px w-2.5 bg-[#252525]" />
    </div>
  );
}

function StatusBar() {
  const dot = <circle cx="12.500" cy="11" r="2.600" fill="#7fc41c" stroke="none" />;
  const box = (
    <svg width="12" height="12" viewBox="0 0 12 12" fill="none" stroke="#b7b8ba" strokeWidth="1.100"><path d="M.5.5h11v3H.5zM1.500 3.500v8h9v-8M4 6.500h4" /></svg>
  );
  return (
    <footer className="flex h-[21px] w-full shrink-0 items-center border-t border-[#8b8d92] bg-[#e3e4e6] text-[12px] text-[#111]">
      <div className="flex pt-0.5 font-['Noto_Sans','Noto_Sans_CJK_SC',sans-serif]"><Fit w={341}>要将输入定向到该虚拟机，请将鼠标指针移入其中或按 Ctrl+G。</Fit></div>
      <div className="ml-auto flex items-center">
        <svg width="16" height="14" viewBox="0 0 16 14" fill="none" stroke="#77797c" strokeWidth="1.300"><path d="M3 1h10l2.500 8v4H.7V9z M.7 9H15" />{dot}</svg>
        <svg className="ml-[6px]" width="14" height="14" viewBox="0 0 14 14" fill="none" stroke="#c3c4c6"><circle cx="7" cy="7" r="6.300" /><circle cx="7" cy="7" r="2" /><path d="M3 5l2 1M9 8l2 1" /></svg>
        <svg className="ml-[7px]" width="15" height="14" viewBox="0 0 15 14" fill="none" stroke="#66686b" strokeWidth="1.200"><path d="M.6.6h7.500v5H.6zM4 5.500v2H1" /><path d="M6.500 4.500h7.500v5H6.500zM10 9.500v3" /><path d="M1 8v5.500h9" strokeDasharray="1 1" />{dot}</svg>
        <svg className="ml-[6px]" width="15" height="14" viewBox="0 0 15 14" fill="none" stroke="#77797c" strokeWidth="1.200"><path d="M1 5h2.500L7 1.500v10L3.500 8.500H1zM9 4.500q2 2 0 4.500M11 2.500q3.500 4 0 8" />{dot}</svg>
        <div className="ml-[7px] flex gap-[9px]">{box}{box}{box}</div>
        <i className="ml-[10px] h-[17px] w-px bg-[#9c9da0]" />
        <svg className="ml-[8px]" width="15" height="14" viewBox="0 0 15 14" fill="none" stroke="#66686b" strokeWidth="1.200"><path d="M.6.6h13v8.400l-4 4H.6zM13.600 9h-4v4" /></svg>
        <svg className="ml-[10px]" width="9" height="18" viewBox="0 0 9 18" stroke="#77797c"><path d="M0 16l9-9M4 16l5-5M7 17l2-2" /></svg>
      </div>
    </footer>
  );
}

export default function App() {
  return (
    <div className="flex h-[769px] w-[1277px] flex-col overflow-hidden bg-white font-['Noto_Sans','Noto_Sans_CJK_SC',sans-serif]">
      <TabStrip />
      <main className="relative h-[721px] w-full shrink-0 overflow-hidden bg-[radial-gradient(ellipse_at_620px_260px,#303253_0%,#1f2052_25%,#1a1b42_55%,#12132f_100%)]">
        <div className="absolute inset-0 bg-[linear-gradient(90deg,#1c1d3f00_0%,#1c1d3f00_79%,#12142ecc_100%),linear-gradient(180deg,#12142e00_55%,#141630e0_100%)]" />
        <svg className="absolute top-0 left-0" width="1277" height="721" viewBox="0 0 1277 721" fill="none">
          <path d="M603 173Q610 177 618 178V212L603 216z" fill="#42434f" />
          <path d="M603 173Q610 177 618 178" stroke="#8d8fa5" />
          <path d="M603 216L618 212" stroke="#0b0b3d" strokeWidth="2" />
          <path d="M945 686v10" stroke="#0a0b25" strokeWidth="2" />
        </svg>
        <span className="absolute top-[468px] left-[612px] text-[17px] font-semibold text-[#d7d7dc]">t</span>
        <Panel />
        <AppMenu />
        <TaskManager />
        <Login />
      </main>
      <StatusBar />
    </div>
  );
}
